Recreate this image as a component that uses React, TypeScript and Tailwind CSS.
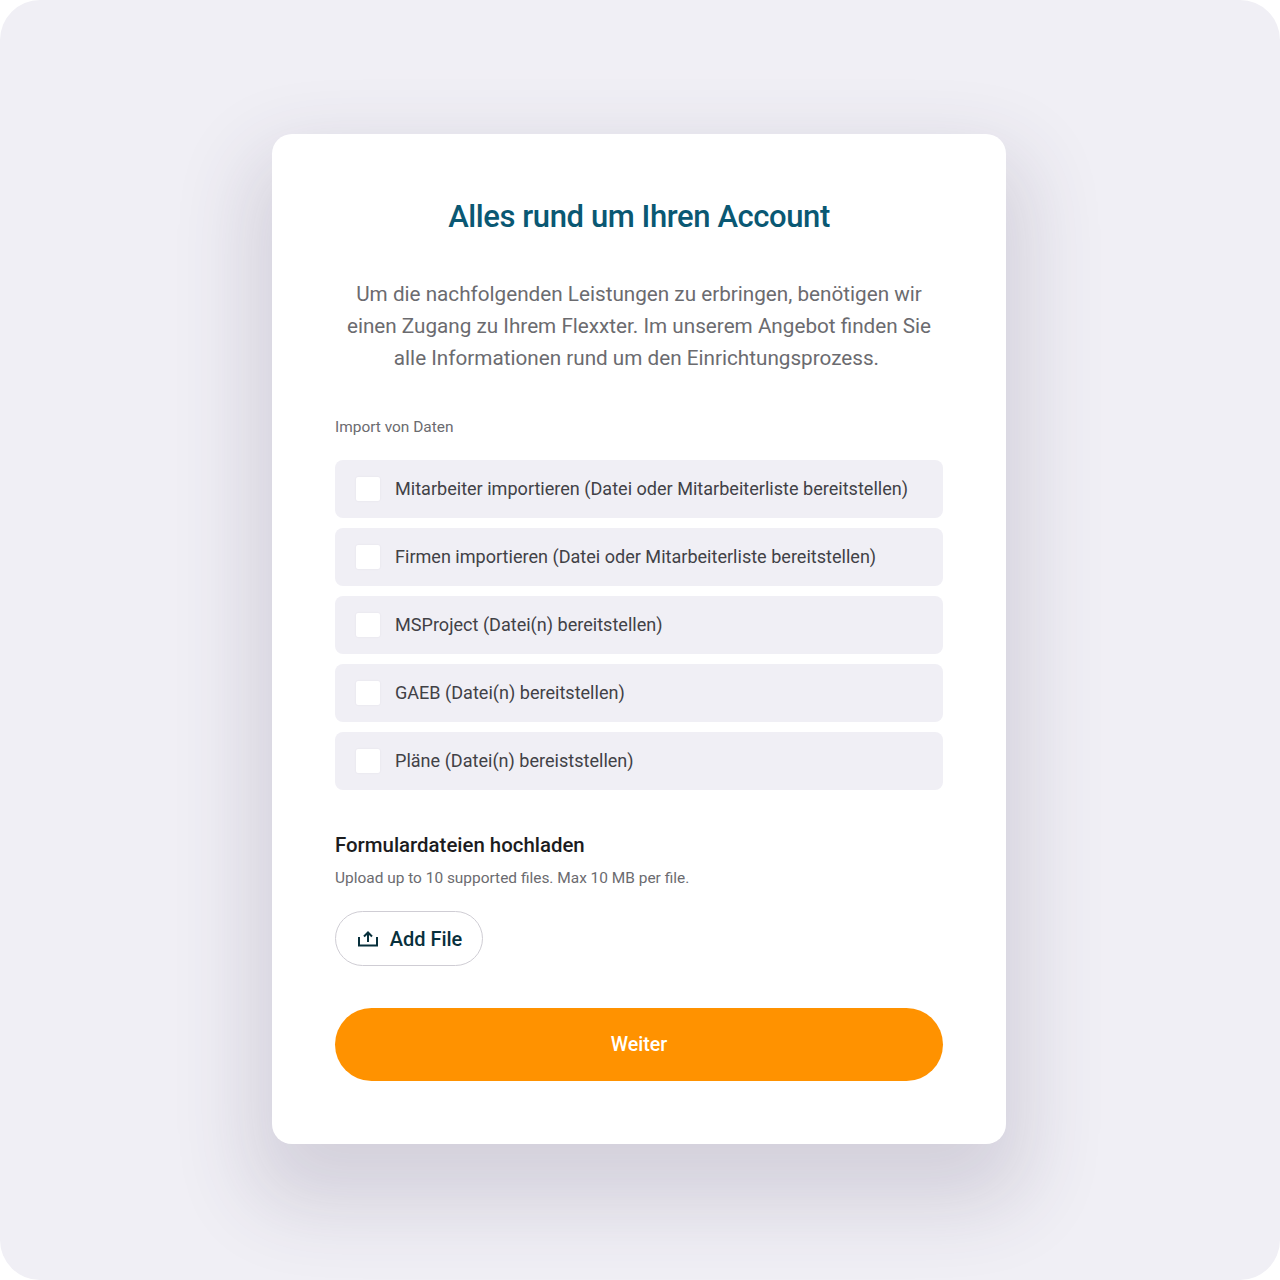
const items = [
  'Mitarbeiter importieren (Datei oder Mitarbeiterliste bereitstellen)',
  'Firmen importieren (Datei oder Mitarbeiterliste bereitstellen)',
  'MSProject (Datei(n) bereitstellen)',
  'GAEB (Datei(n) bereitstellen)',
  'Pläne (Datei(n) bereiststellen)',
]

export default function App() {
  return (
    <div className="bg-white font-['Roboto',sans-serif]">
      <div className="h-[1280px] rounded-[40px] bg-[#f0eff5] pt-[134px] overflow-hidden">
        <div className="ml-[272px] w-[734px] h-[1010px] rounded-[20px] bg-white px-[63px] pt-[63px] shadow-[0_40px_80px_20px_rgba(60,50,90,0.16)]">
          <h1 className="text-center text-[31px] leading-[40px] font-medium tracking-[-0.41px] text-[#0a5873]">Alles rund um Ihren Account</h1>
          <p className="mt-[41px] text-center text-[20.7px] leading-[32px] text-[#6b6b6f]">
            Um die nachfolgenden Leistungen zu erbringen, benötigen wir<br />
            einen Zugang zu Ihrem Flexxter. Im unserem Angebot finden Sie<br />
            alle Informationen rund um den Einrichtungsprozess.{'\u00a0'}
          </p>
          <div className="mt-[43px] text-[15.45px] leading-[20px] text-[#6b6b6f]">Import von Daten</div>
          <div className="mt-[23px] flex flex-col gap-[10px]">
            {items.map(label => (
              <label key={label} className="flex h-[58px] items-center gap-[15px] rounded-[8px] bg-[#f0eff5] pl-[21px]">
                <span className="h-[24px] w-[24px] rounded-[2px] bg-white shadow-[0_0_2px_rgba(60,50,90,0.08)]" />
                <span className="text-[18.07px] leading-[24px] text-[#414146]">{label}</span>
              </label>
            ))}
          </div>
          <h2 className="mt-[42px] text-[20.4px] leading-[26px] font-medium text-[#1c1c1e]">Formulardateien hochladen</h2>
          <p className="mt-[10px] text-[15.45px] leading-[20px] text-[#6b6b6f]">Upload up to 10 supported files. Max 10 MB per file.</p>
          <button className="mt-[23px] flex h-[55px] w-[148px] items-center justify-center gap-[12px] rounded-full border-[1.5px] border-[#cfcdd4] bg-white pl-[2px] text-[20px] font-medium text-[#08303c]">
            <svg width="20" height="16" viewBox="0 0 20 16" fill="none" stroke="currentColor" strokeWidth="2">
              <path d="M1 6v8.5h18V6" />
              <path d="M10 11V2" />
              <path d="M6 5.5l4-4 4 4" />
            </svg>
            Add File
          </button>
          <button className="mt-[42px] h-[73px] w-full rounded-full bg-[#ff9200] pt-[1px] text-[19.7px] font-medium text-white">Weiter</button>
        </div>
      </div>
    </div>
  )
}
